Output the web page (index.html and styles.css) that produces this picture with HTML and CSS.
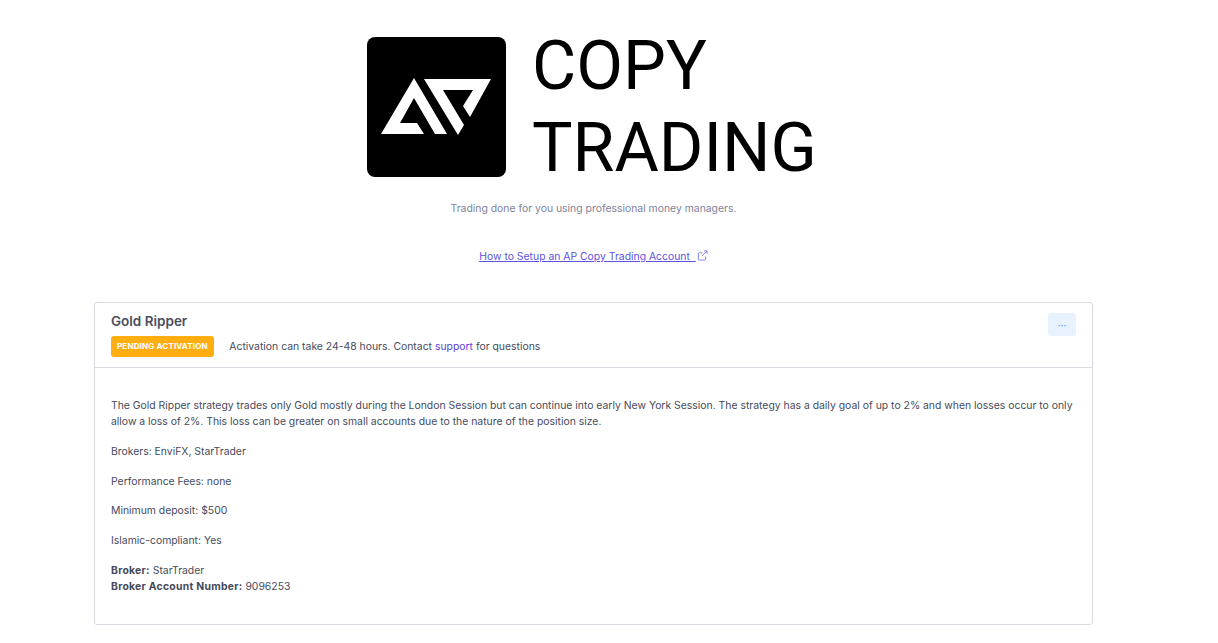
FILE: index.html
```html
<!DOCTYPE html>
<html lang="en">
<head>
<meta charset="utf-8">
<title>Copy Trading</title>
<link rel="stylesheet" href="styles.css">
</head>
<body>
<main class="page">
  <header class="hero">
    <div class="brand">
      <svg class="logo" viewBox="0 0 139 140" aria-hidden="true">
        <rect width="139" height="140" rx="8" fill="#000"/>
        <path fill="#fff" d="M14 97 L47 41 L80 97 L68 97 L47 61 L33 86 L50 86 L57 97 Z"/>
        <path fill="#fff" d="M57 42 L124 42 L103 80 L96 69 L106 53 L76 53 L97 88 L91 98 Z"/>
      </svg>
      <div class="brand-name"><span>COPY</span><span>TRADING</span></div>
    </div>
    <p class="tagline">Trading done for you using professional money managers.</p>
    <a class="guide" href="#">How to Setup an AP Copy Trading Account&nbsp;
      <svg class="ext" viewBox="0 0 12 12" aria-hidden="true"><path d="M9.5 7v3a1 1 0 0 1-1 1h-6a1 1 0 0 1-1-1V4a1 1 0 0 1 1-1h3M7.5 1h3.500v3.500M11 1L5.500 6.500"/></svg>
    </a>
  </header>
  <section class="card">
    <div class="card-head">
      <div>
        <h2 class="card-title">Gold Ripper</h2>
        <div class="status">
          <span class="badge">PENDING ACTIVATION</span>
          <span>Activation can take 24-48 hours. Contact <a class="support" href="#">support</a> for questions</span>
        </div>
      </div>
      <button class="more" type="button" aria-label="More">···</button>
    </div>
    <div class="card-body">
      <p>The Gold Ripper strategy trades only Gold mostly during the London Session but can continue into early New York Session. The strategy has a daily goal of up to 2% and when losses occur to only allow a loss of 2%. This loss can be greater on small accounts due to the nature of the position size.</p>
      <p>Brokers: EnviFX, StarTrader</p>
      <p>Performance Fees: none</p>
      <p>Minimum deposit: $500</p>
      <p>Islamic-compliant: Yes</p>
      <p class="last"><b>Broker:</b> StarTrader<br><b>Broker Account Number:</b> 9096253</p>
    </div>
  </section>
</main>
</body>
</html>
```
FILE: styles.css
```css
* { box-sizing: border-box; }
html, body { margin: 0; background: #fff; }
body { font-family: Inter, "Liberation Sans", sans-serif; font-size: 10.4px; line-height: 16px; color: #464a5c; overflow: hidden; }
.page { width: 999px; margin-left: 94px; padding-top: 37px; }
.hero { display: flex; flex-direction: column; align-items: center; }
.brand { display: flex; gap: 26px; height: 140px; }
.logo { width: 139px; height: 140px; flex: none; }
.brand-name { display: flex; flex-direction: column; font-family: Roboto, sans-serif; font-size: 68px; line-height: 82px; color: #000; margin-top: -12px; width: 288px; }
.tagline { margin: 24px 0 0; color: #7e8299; line-height: 16px; }
.guide { margin-top: 32px; color: #5b52e0; text-decoration: underline; display: block; }
.ext { width: 11px; height: 11px; fill: none; stroke: #7e7ae0; stroke-width: 1; vertical-align: -1px; margin-left: 1px; }
.card { margin-top: 37px; height: 323px; border: 1px solid #d9dbe2; border-radius: 3px; }
.card-head { height: 65px; padding: 10px 16px 0; display: flex; justify-content: space-between; border-bottom: 1px solid #d9dbe2; }
.card-title { margin: 0; font-size: 13.5px; line-height: 17px; font-weight: 600; color: #4b4e5e; }
.status { display: flex; align-items: center; gap: 15.500px; margin-top: 6px; }
.badge { background: #ffad0f; color: #fff; font-size: 8px; font-weight: 700; height: 21px; line-height: 21px; padding: 0 6px; border-radius: 3px; letter-spacing: .17px; }
.support { color: #5b3fd6; text-decoration: none; }
.more { width: 28px; height: 23px; border: 0; border-radius: 3px; background: #e8f2ff; color: #3e97ff; font-size: 10px; padding: 0; font-family: inherit; }
.card-body { padding: 30px 16px 0; }
.card-body p { margin: 0 0 13.750px; }
.card-body .last { margin: 0; }
.card-body b { font-weight: 700; letter-spacing: .27px; }
```
